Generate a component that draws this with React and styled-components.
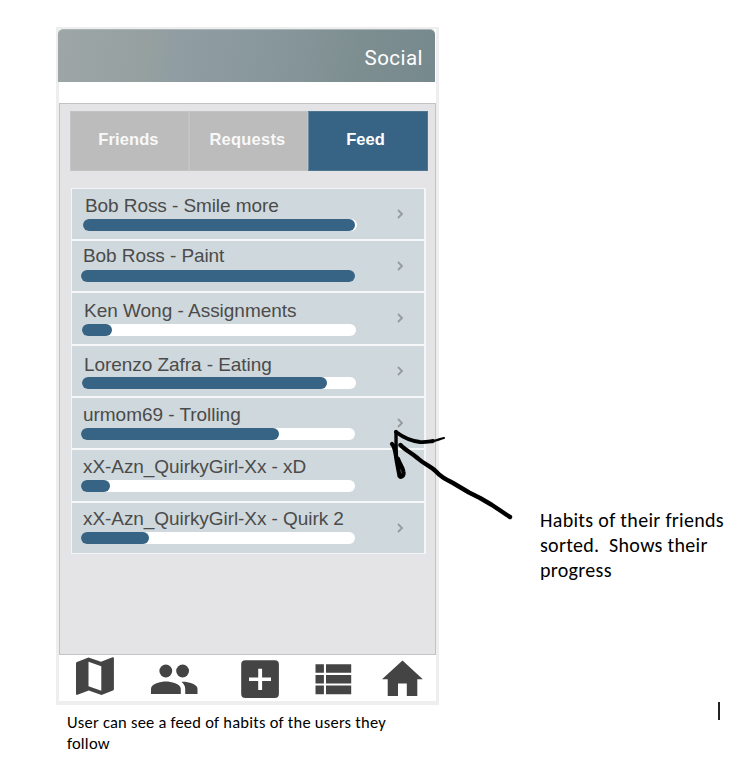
import React from 'react';
import styled, { createGlobalStyle } from 'styled-components';

const Global = createGlobalStyle`
  * { box-sizing: border-box; }
  body { margin: 0; background: #fff; }
`;

const Page = styled.main`
  position: relative;
  width: 740px;
  height: 768px;
  overflow: hidden;
  background: #fff;
  padding: 27px 0 0 56px;
  font-family: 'Liberation Sans', Arial, sans-serif;
`;

const Columns = styled.div`
  display: flex;
  align-items: flex-start;
`;

const Phone = styled.section`
  width: 383px;
  height: 678px;
  flex: none;
  display: flex;
  flex-direction: column;
  border: 3px solid #eeeeee;
  border-width: 2px 3px 4px 3px;
  background: #fff;
`;

const Header = styled.header`
  height: 53px;
  margin: 0 1px 0 -1px;
  flex: none;
  display: flex;
  align-items: center;
  justify-content: flex-end;
  padding: 3px 12px 0 0;
  border-radius: 5px 5px 0 0;
  border-top: 1px solid #a9b4b6;
  background: linear-gradient(100deg, #9ea6a8 0%, #95a09f 24%, #909da2 32%, #8a999e 50%, #7d8e90 80%, #76898e 100%);
  color: #fff;
  font: 400 20.5px/24px Roboto, sans-serif;
  letter-spacing: 0.45px;
`;

const Panel = styled.div`
  height: 552px;
  flex: none;
  margin-top: 21px;
  padding: 7px 7px 0 10px;
  border: 1px solid #c2c2c7;
  background: #e4e4e6;
`;

const Tabs = styled.nav`
  display: grid;
  grid-template-columns: 119px 119px 120px;
  height: 60px;
`;

const Tab = styled.button`
  border: 1px solid ${(p) => (p.$active ? '#4f7793' : '#c3c3c3')};
  border-left-color: ${(p) => (p.$active ? '#6d8ca2' : '#c6c6c6')};
  padding: ${(p) => (p.$active ? '0 5px 5px 0' : '0 2px 5px 0')};
  background: ${(p) => (p.$active ? '#376485' : '#bcbcbc')};
  color: ${(p) => (p.$active ? '#fff' : '#f8f8f8')};
  font: 700 16.5px/20px 'Liberation Sans', Arial, sans-serif;
  letter-spacing: ${(p) => p.$track || 0}px;
`;

const List = styled.ul`
  list-style: none;
  width: 355px;
  height: 366px;
  margin: 17px 0 0 1px;
  padding: 0;
  display: grid;
  grid-template-rows: 52px 52px 53px 52px 52px 53px 50px;
  border: 1px solid #f3f5f6;
  border-right-width: 2px;
`;

const Row = styled.li`
  display: flex;
  min-height: 0;
  justify-content: space-between;
  padding-left: ${(p) => p.$left}px;
  background: #cfd8dc;
  border-bottom: 2px solid #f5f7f8;
  &:last-child { border-bottom: 0; }
`;

const Habit = styled.div`
  padding-top: ${(p) => p.$top}px;
`;

const Name = styled.div`
  height: 22px;
  padding-left: 2px;
  color: #4b4b4b;
  font-size: 19px;
  line-height: 22px;
  white-space: nowrap;
  letter-spacing: ${(p) => p.$track}px;
`;

const Track = styled.div`
  width: 274px;
  height: 12px;
  margin-top: ${(p) => p.$gap}px;
  border-radius: 6px;
  background: #fff;
`;

const Fill = styled.div`
  width: ${(p) => p.$width}px;
  height: 12px;
  border-radius: 6px;
  background: #376485;
`;

const Chevron = styled.svg`
  width: 8px;
  height: 12px;
  margin: 19px 20px 0 0;
  fill: none;
  stroke: #969b9e;
  stroke-width: 1.8;
`;

const BottomNav = styled.nav`
  flex: 1;
  svg { display: block; width: 377px; height: 46px; fill: #444; }
`;

const Note = styled.p`
  margin: 0;
  color: #000;
  font-family: Carlito, Lato, sans-serif;
  white-space: pre;
`;

const SideNote = styled(Note)`
  margin: 481px 0 0 101px;
  font-size: 20px;
  line-height: 25px;
`;

const Caption = styled(Note)`
  margin: 7px 0 0 11px;
  font-size: 16.5px;
  line-height: 21px;
`;

const Line = styled.span`
  display: block;
  letter-spacing: ${(p) => p.$track}px;
`;

const Arrow = styled.svg`
  position: absolute;
  left: 380px;
  top: 420px;
  width: 140px;
  height: 110px;
  fill: none;
  stroke: #000;
  stroke-linecap: round;
  stroke-linejoin: round;
`;

const Cursor = styled.i`
  position: absolute;
  left: 718px;
  top: 702px;
  width: 2px;
  height: 18px;
  background: #222;
`;

const habits = [
  { name: 'Bob Ross - Smile more', left: 11, top: 6, gap: 2, width: 272, track: -0.08 },
  { name: 'Bob Ross - Paint', left: 9, top: 4, gap: 3, width: 274, track: -0.08 },
  { name: 'Ken Wong - Assignments', left: 10, top: 7, gap: 2, width: 30, track: -0.02 },
  { name: 'Lorenzo Zafra - Eating', left: 10, top: 8, gap: 1, width: 245, track: -0.06 },
  { name: 'urmom69 - Trolling', left: 9, top: 6, gap: 2, width: 198, track: -0.04 },
  { name: 'xX-Azn_QuirkyGirl-Xx - xD', left: 9, top: 6, gap: 2, width: 28.5, track: -0.07, hideArrow: true },
  { name: 'xX-Azn_QuirkyGirl-Xx - Quirk 2', left: 9, top: 5, gap: 2, width: 68, track: -0.07 },
];

export default function App() {
  return (
    <Page>
      <Global />
      <Columns>
        <Phone>
          <Header>Social</Header>
          <Panel>
            <Tabs>
              <Tab $track={0.1}>Friends</Tab>
              <Tab $track={0.22}>Requests</Tab>
              <Tab $active>Feed</Tab>
            </Tabs>
            <List>
              {habits.map((h) => (
                <Row key={h.name} $left={h.left}>
                  <Habit $top={h.top}>
                    <Name $track={h.track}>{h.name}</Name>
                    <Track $gap={h.gap}><Fill $width={h.width} /></Track>
                  </Habit>
                  {!h.hideArrow && (
                    <Chevron viewBox="0 0 8 12"><path d="M2 2 L6 6 L2 10" /></Chevron>
                  )}
                </Row>
              ))}
            </List>
          </Panel>
          <BottomNav>
            <svg viewBox="59 655 377 46">
              <path fillRule="evenodd" d="M76 663.2q0-1 1-1.3L88.5 657.5 101 661.8 112.5 657.3q1.400-.4 1.400 1V689.300q0 1-1 1.300L101.500 695 88.700 690.500 77.500 694.800q-1.500.4-1.500-1ZM88.500 661.800V686.300L101.300 690.700V666.200Z" />
              <circle cx="165.800" cy="671" r="6.400" />
              <circle cx="182.600" cy="671" r="6.400" />
              <path d="M151 694V688.700c0-4.700 9.800-7.200 14.900-7.200s14.900 2.500 14.900 7.200V694ZM185.200 694V688.700c0-3-1.500-5.200-3.700-6.800 5-.5 16 2 16 6.800V694Z" />
              <path fillRule="evenodd" d="M245.500 660.300H274.700Q278.900 660.300 278.900 664.500V693.700Q278.900 698 274.700 698H245.500Q241.200 698 241.200 693.700V664.500Q241.200 660.300 245.500 660.300ZM258.200 668.800V677.500H249V681.100H258.200V690H262.100V681.100H271V677.500H262.100V668.800Z" />
              <path d="M315.500 664.200h8.400v8.600h-8.400zM326 664.200h25.200v8.600H326zM315.500 675h8.400v8.500h-8.400zM326 675h25.200v8.500H326zM315.500 685.500h8.400v8.700h-8.400zM326 685.500h25.200v8.700H326z" />
              <path d="M402.500 660.400 422.800 679.200H417.300V696H406.800V683.500H398V696H387.700V679.200H382Z" />
            </svg>
          </BottomNav>
        </Phone>
        <SideNote>
          <Line $track={0.3}>Habits of their friends</Line>
          <Line $track={0.3}>{'sorted.  Shows their'}</Line>
          <Line $track={0.3}>progress</Line>
        </SideNote>
      </Columns>
      <Caption>
        <Line $track={0.23}>User can see a feed of habits of the users they</Line>
        <Line $track={0.23}>follow</Line>
      </Caption>
      <Arrow viewBox="380 420 140 110">
        <path strokeWidth="3.800" d="M396 432C402 436.500 410 441 420 442C426 442.300 429 441.500 433 441" />
        <path strokeWidth="2.200" d="M432 441C437 441 440 438.500 444 438" />
        <path strokeWidth="3.400" d="M396 431.500C396 440 396 449 396.500 458" />
        <path strokeWidth="4.200" d="M392 444C394 446 395 449 396 456C397 464 399 472 399.500 476C401 478 404 476 403.500 472C403 467 400 465 398 459" />
        <path strokeWidth="4.400" d="M400.500 445C405 450 411 452.500 418 458.500C424 464 430 466 435 470.500C441 477 445 479 453 483L469 492.500L480 498L492 505C499 509.500 505 514 510 517" />
      </Arrow>
      <Cursor />
    </Page>
  );
}
